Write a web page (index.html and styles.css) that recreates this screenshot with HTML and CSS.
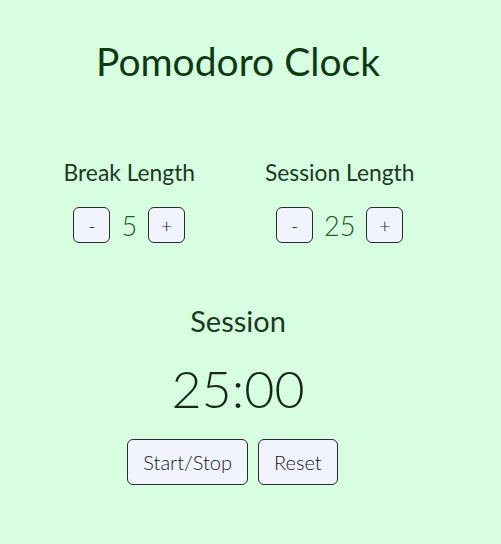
FILE: index.html
```html
<!DOCTYPE html>
<html>
<head>
<meta charset="utf-8">
<link rel="stylesheet" href="styles.css">
</head>
<body>
<div class="app">
  <h1 class="title">Pomodoro Clock</h1>
  <div class="settings">
    <div class="setting">
      <div class="label">Break Length</div>
      <div class="controls">
        <button class="step">-</button>
        <span class="value">5</span>
        <button class="step">+</button>
      </div>
    </div>
    <div class="setting">
      <div class="label">Session Length</div>
      <div class="controls">
        <button class="step">-</button>
        <span class="value">25</span>
        <button class="step">+</button>
      </div>
    </div>
  </div>
  <div class="timer">
    <div class="timer-label">Session</div>
    <div class="time">25:00</div>
    <div class="actions">
      <button class="action">Start/Stop</button>
      <button class="action">Reset</button>
    </div>
  </div>
</div>
</body>
</html>
```
FILE: styles.css
```css
html, body {
  margin: 0;
  padding: 0;
}
body {
  background: #d8fee1;
  font-family: Lato, "Noto Sans", sans-serif;
  height: 544px;
}
.app {
  width: 460px;
  margin-left: 8px;
  display: flex;
  flex-direction: column;
  align-items: center;
}
.title {
  margin: 35px 0 0;
  font-size: 39px;
  font-weight: 400;
  color: #0d3a12;
  line-height: 52px;
}
.settings {
  display: flex;
  justify-content: center;
  gap: 70px;
  margin-top: 71px;
  padding-left: 2px;
}
.setting {
  display: flex;
  flex-direction: column;
  align-items: center;
}
.label {
  font-size: 22.8px;
  color: #1a3a1e;
  line-height: 28px;
}
.controls {
  display: flex;
  align-items: center;
  gap: 11px;
  margin-top: 21px;
}
.step {
  width: 37px;
  height: 36px;
  border: 1px solid #2a2a2a;
  border-radius: 6px;
  background: #f1f3fd;
  color: #141428;
  font-family: Lato, sans-serif;
  font-size: 20px;
  font-weight: 300;
  padding: 0;
}
.value {
  font-size: 27px;
  font-weight: 300;
  color: #1f5a26;
}
.timer {
  display: flex;
  flex-direction: column;
  align-items: center;
  margin-top: 60px;
}
.timer-label {
  font-size: 29px;
  color: #1a3a1e;
  line-height: 36px;
}
.time {
  font-size: 52px;
  font-weight: 300;
  color: #16291a;
  line-height: 64px;
  margin-top: 17px;
}
.actions {
  display: flex;
  gap: 10px;
  padding-right: 11px;
  margin-top: 19px;
}
.action {
  height: 46px;
  padding: 0 15px;
  border: 1px solid #2a2a2a;
  border-radius: 6px;
  background: #f1f3fd;
  color: #141428;
  font-family: Lato, sans-serif;
  font-size: 20px;
  font-weight: 300;
}
```
